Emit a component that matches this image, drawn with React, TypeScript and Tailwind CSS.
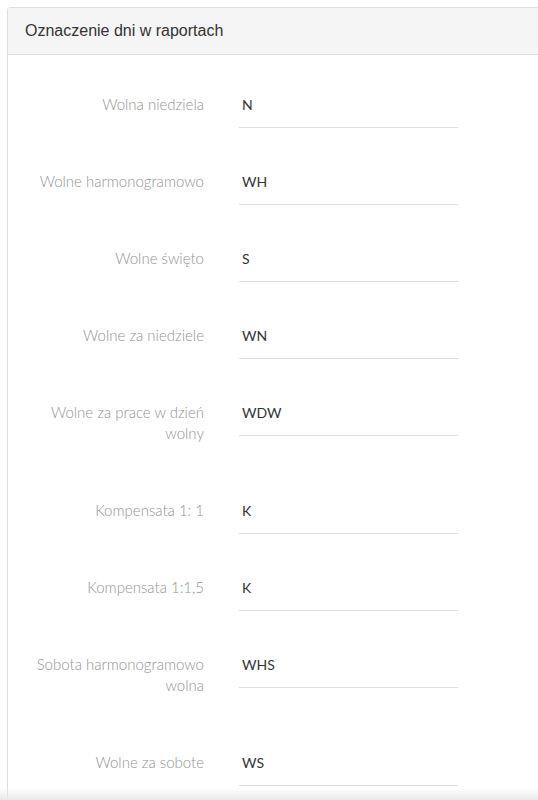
import React from 'react';

const rows: { label: string; value: string }[] = [
  { label: 'Wolna niedziela', value: 'N' },
  { label: 'Wolne harmonogramowo', value: 'WH' },
  { label: 'Wolne święto', value: 'S' },
  { label: 'Wolne za niedziele', value: 'WN' },
  { label: 'Wolne za prace w dzień wolny', value: 'WDW' },
  { label: 'Kompensata 1: 1', value: 'K' },
  { label: 'Kompensata 1:1,5', value: 'K' },
  { label: 'Sobota harmonogramowo wolna', value: 'WHS' },
  { label: 'Wolne za sobote', value: 'WS' },
];

function Row({ label, value }: { label: string; value: string }) {
  return (
    <div className="flex items-start">
      <div className="w-[172px] pb-[56px] text-right text-[15px] font-light leading-[21px] text-[#949494]">{label}</div>
      <div className="ml-[35px] w-[219px] border-b border-[#ddd] pb-[12px] pl-[3px] text-[14px] leading-[21px] text-[#333]">{value}</div>
    </div>
  );
}

export default function App() {
  return (
    <div className="relative h-[800px] w-[538px] overflow-hidden bg-white" style={{ fontFamily: 'Lato, "Noto Sans", sans-serif' }}>
      <div className="ml-[7px] mt-[7px] w-[560px] rounded-tl-[4px] border-l border-t border-[#ddd]">
        <div className="flex h-[47px] items-center border-b border-[#ddd] bg-[#f5f5f5] pl-[17px] text-[16px] text-[#333]" style={{ fontFamily: '"Liberation Sans", Arial, sans-serif' }}>
          Oznaczenie dni w raportach
        </div>
        <div className="pl-[24px] pt-[39px]">
          {rows.map((r) => (
            <Row key={r.label} label={r.label} value={r.value} />
          ))}
        </div>
      </div>
      <div className="pointer-events-none absolute bottom-0 left-0 h-[12px] w-full bg-gradient-to-b from-white/0 to-[#e8e8e8]" />
    </div>
  );
}
